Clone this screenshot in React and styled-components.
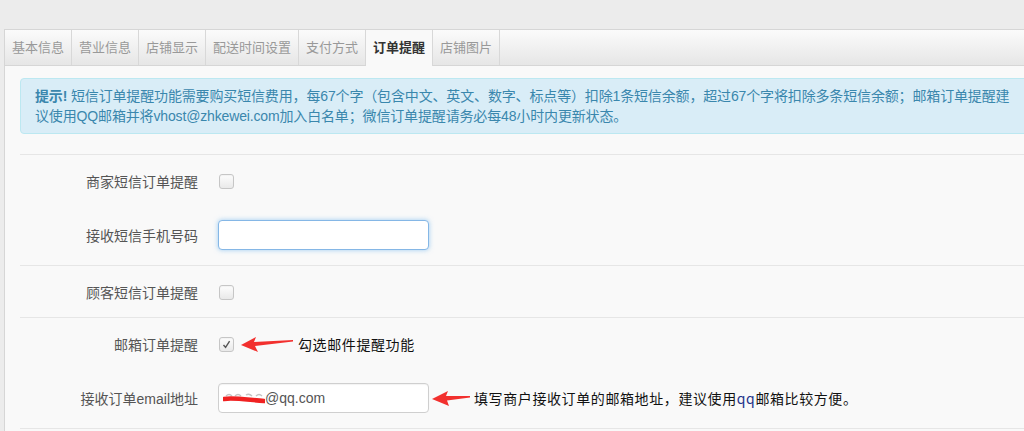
import React from 'react'
import styled, { createGlobalStyle } from 'styled-components'

const GlobalStyle = createGlobalStyle`
  html, body {
    margin: 0;
    padding: 0;
    background: #ececec;
    overflow: hidden;
    font-family: "Liberation Sans", "Noto Sans CJK SC", sans-serif;
  }
`

const Page = styled.div`
  width: 1024px;
  height: 431px;
  padding: 29px 0 0 4px;
  box-sizing: border-box;
  display: flex;
  flex-direction: column;
`

const TabBar = styled.ul`
  display: flex;
  margin: 0;
  padding: 0;
  list-style: none;
  height: 37px;
  box-sizing: border-box;
  border: 1px solid #d6d6d6;
  border-right: none;
  background: linear-gradient(#fbfbfb, #e6e6e6);
`

const Tab = styled.li`
  padding: 0 7px;
  line-height: 35px;
  font-size: 13px;
  color: ${p => (p.$active ? '#333' : '#999')};
  font-weight: ${p => (p.$active ? 'bold' : 'normal')};
  border-right: 1px solid #d8d8d8;
  background: ${p => (p.$active ? '#f9f9f9' : 'transparent')};
  height: ${p => (p.$active ? '36px' : '35px')};
  white-space: nowrap;
`

const Panel = styled.div`
  flex: 1;
  background: #f9f9f9;
  border-left: 1px solid #d6d6d6;
  padding: 12px 0 0 15px;
  overflow: hidden;
`

const Alert = styled.div`
  width: 1040px;
  padding: 7px 14px;
  border: 1px solid #bce8f1;
  border-radius: 4px;
  background: #d9edf7;
  color: #3a87ad;
  font-size: 14px;
  line-height: 20px;
  letter-spacing: -0.15px;
  white-space: nowrap;
  strong {
    font-weight: bold;
  }
`

const Group = styled.div`
  display: flex;
  flex-direction: column;
  gap: 29px;
  padding: 16px 0 15px;
  border-top: 1px solid #e6e6e6;
  margin-top: ${p => (p.$first ? '20px' : '0')};
  border-bottom: ${p => (p.$last ? '1px solid #e6e6e6' : 'none')};
`

const Row = styled.div`
  display: flex;
  align-items: center;
  height: ${p => (p.$tall ? '30px' : '20px')};
`

const Label = styled.div`
  width: 178px;
  margin-right: 20px;
  text-align: right;
  font-size: 14px;
  color: #555;
  white-space: nowrap;
`

const Checkbox = styled.span`
  width: 15px;
  height: 15px;
  margin-left: 1px;
  box-sizing: border-box;
  border: 1px solid #c6c6c6;
  border-radius: 3px;
  background: linear-gradient(#fdfdfd, #e9e9e9);
  box-shadow: inset 0 1px 1px rgba(0, 0, 0, 0.04);
  display: flex;
  align-items: center;
  justify-content: center;
`

const InputBox = styled.div`
  width: 211px;
  height: 30px;
  box-sizing: border-box;
  border: 1px solid ${p => (p.$focused ? '#85b7e6' : '#cfcfcf')};
  border-radius: 4px;
  background: #fff;
  box-shadow: ${p => (p.$focused ? '0 0 5px rgba(82, 168, 236, 0.55)' : 'inset 0 1px 1px rgba(0,0,0,0.05)')};
  display: flex;
  align-items: center;
  padding-left: 4px;
  font-size: 14px;
  color: #555;
`

const Arrow = styled.svg`
  flex: none;
  margin-left: ${p => p.$gap}px;
`

const Note = styled.span`
  margin-left: ${p => p.$gap}px;
  font-family: "Noto Sans CJK SC", sans-serif;
  font-size: 14px;
  letter-spacing: 0.6px;
  color: #111;
  white-space: nowrap;
  em {
    font-style: normal;
    color: #23338a;
  }
`

const tabs = ['基本信息', '营业信息', '店铺显示', '配送时间设置', '支付方式', '订单提醒', '店铺图片']

const CheckMark = () => (
  <svg width="9" height="9" viewBox="0 0 9 9">
    <path d="M1.5 5 L3.6 7.4 L7.6 1.2" fill="none" stroke="#555" strokeWidth="1.4" />
  </svg>
)

const Scribble = () => (
  <svg width="42" height="14" viewBox="0 0 42 14">
    <path d="M3 5 Q6 2 9 5 M12 5 Q15 2 18 5 M23 4 Q26 2 29 5 M33 5 Q36 2 39 5" stroke="#c4c4c4" strokeWidth="1.4" fill="none" />
    <path d="M1 8 C 10 6.5, 22 8.5, 41 10" stroke="#f02222" strokeWidth="4.5" strokeLinecap="round" fill="none" />
  </svg>
)

const App = () => (
  <Page>
    <GlobalStyle />
    <TabBar>
      {tabs.map(t => (
        <Tab key={t} $active={t === '订单提醒'}>{t}</Tab>
      ))}
    </TabBar>
    <Panel>
      <Alert>
        <strong>提示!</strong> 短信订单提醒功能需要购买短信费用，每67个字（包含中文、英文、数字、标点等）扣除1条短信余额，超过67个字将扣除多条短信余额；邮箱订单提醒建
        <br />
        议使用QQ邮箱并将vhost@zhkewei.com加入白名单；微信订单提醒请务必每48小时内更新状态。
      </Alert>
      <Group $first>
        <Row>
          <Label>商家短信订单提醒</Label>
          <Checkbox />
        </Row>
        <Row $tall>
          <Label>接收短信手机号码</Label>
          <InputBox $focused />
        </Row>
      </Group>
      <Group>
        <Row>
          <Label>顾客短信订单提醒</Label>
          <Checkbox />
        </Row>
      </Group>
      <Group $last>
        <Row>
          <Label>邮箱订单提醒</Label>
          <Checkbox><CheckMark /></Checkbox>
          <Arrow $gap={7} width="52" height="18" viewBox="0 0 52 18">
            <polygon points="0,10 15,2 13,7 52,5 52,6.6 14,11 17,17" fill="#f2302e" />
          </Arrow>
          <Note $gap={5}>勾选邮件提醒功能</Note>
        </Row>
        <Row $tall>
          <Label>接收订单email地址</Label>
          <InputBox>
            <Scribble />
            <span>@qq.com</span>
          </InputBox>
          <Arrow $gap={3} width="38" height="17" viewBox="0 0 38 17">
            <polygon points="0,9 16,1 14,6 38,6 38,7.6 15,10.5 17,16" fill="#f2302e" />
          </Arrow>
          <Note $gap={4}>填写商户接收订单的邮箱地址，建议使用<em>qq</em>邮箱比较方便。</Note>
        </Row>
      </Group>
    </Panel>
  </Page>
)

export default App
